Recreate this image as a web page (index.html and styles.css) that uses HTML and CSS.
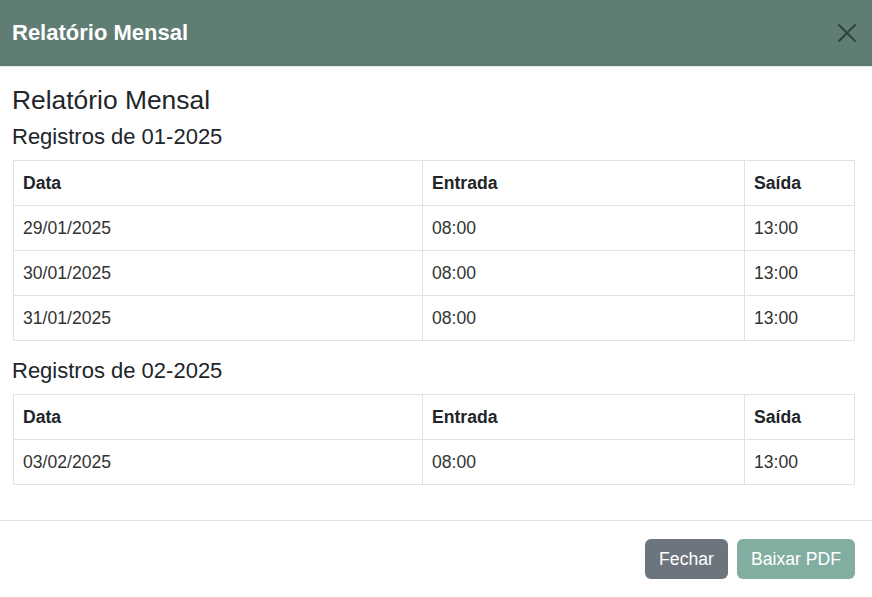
FILE: index.html
```html
<!DOCTYPE html>
<html lang="pt">
<head>
<meta charset="utf-8">
<title>Relatório Mensal</title>
<link rel="stylesheet" href="styles.css">
</head>
<body>
<div class="modal">
  <div class="modal-header">
    <h2 class="modal-title">Relatório Mensal</h2>
    <button class="close" aria-label="Fechar">
      <svg width="20" height="20" viewBox="0 0 20 20"><path d="M1.5 1.5 L18.5 18.5 M18.5 1.5 L1.5 18.5" stroke="#2d4139" stroke-width="1.8" fill="none"/></svg>
    </button>
  </div>
  <div class="modal-body">
    <h3 class="report-title">Relatório Mensal</h3>
    <h4 class="section-title">Registros de 01-2025</h4>
    <table class="grid">
      <thead><tr><th class="c1">Data</th><th class="c2">Entrada</th><th class="c3">Saída</th></tr></thead>
      <tbody>
        <tr><td>29/01/2025</td><td>08:00</td><td>13:00</td></tr>
        <tr><td>30/01/2025</td><td>08:00</td><td>13:00</td></tr>
        <tr><td>31/01/2025</td><td>08:00</td><td>13:00</td></tr>
      </tbody>
    </table>
    <h4 class="section-title">Registros de 02-2025</h4>
    <table class="grid">
      <thead><tr><th class="c1">Data</th><th class="c2">Entrada</th><th class="c3">Saída</th></tr></thead>
      <tbody>
        <tr><td>03/02/2025</td><td>08:00</td><td>13:00</td></tr>
      </tbody>
    </table>
  </div>
  <div class="modal-footer">
    <button class="btn btn-secondary">Fechar</button>
    <button class="btn btn-primary">Baixar PDF</button>
  </div>
</div>
</body>
</html>
```
FILE: styles.css
```css
* { box-sizing: border-box; }
html, body { margin: 0; padding: 0; background: #fff; }
body { font-family: "Liberation Sans", Arial, sans-serif; color: #212529; width: 872px; height: 597px; overflow: hidden; }
.modal { width: 872px; }
.modal-header {
  height: 67px;
  background: #5f7d73;
  border-bottom: 1px solid #e3e8e6;
  display: flex;
  align-items: center;
  justify-content: space-between;
  padding: 0 15px 0 12px;
}
.modal-title { margin: 0; color: #fff; font-size: 22px; font-weight: bold; line-height: 26px; }
.close { background: none; border: 0; padding: 0; width: 20px; height: 20px; display: flex; cursor: pointer; }
.modal-body { padding: 19px 17px 35px 13px; }
.report-title { margin: 0 0 0 -1px; font-size: 26.4px; font-weight: normal; line-height: 28px; color: #212529; }
.section-title { margin: 11px 0 11px -1px; font-size: 22px; font-weight: normal; line-height: 24px; color: #212529; }
.grid + .section-title { margin-top: 18px; }
.grid { width: 842px; border-collapse: collapse; table-layout: fixed; }
.grid th, .grid td {
  border: 1px solid #dee2e6;
  padding: 10px 9px;
  font-size: 17.6px;
  line-height: 24px;
  text-align: left;
  height: 45px;
}
.grid th { font-weight: bold; color: #212529; }
.grid td { color: #333; }
.c1 { width: 409px; }
.c2 { width: 322px; }
.c3 { width: 110px; }
.grid { width: 841px; }
.modal-footer {
  border-top: 1px solid #dee2e6;
  display: flex;
  justify-content: flex-end;
  gap: 9px;
  padding: 18px 17px 18px 12px;
}
.btn {
  font-family: "Liberation Sans", Arial, sans-serif;
  font-size: 17.6px;
  line-height: 24px;
  padding: 8px 10px;
  border: 0;
  border-radius: 6px;
  color: #fff;
  height: 40px;
}
.btn-secondary { background: #6c757d; width: 83px; }
.btn-primary { background: #82ada1; width: 118px; }
```
